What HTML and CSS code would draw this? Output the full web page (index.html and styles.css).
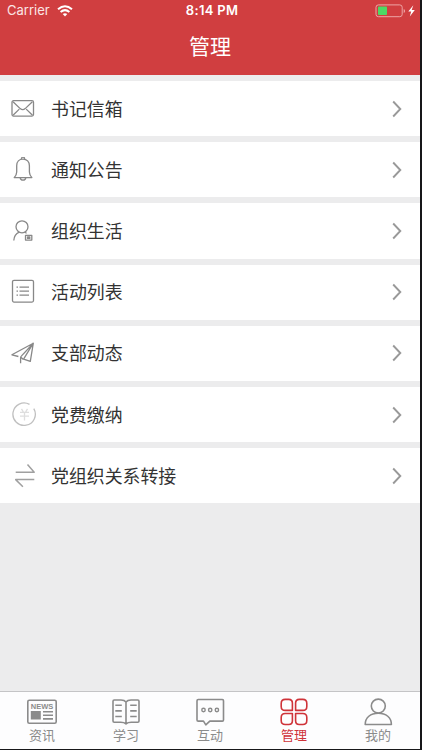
FILE: index.html
```html
<!DOCTYPE html>
<html lang="zh-CN">
<head>
<meta charset="utf-8">
<title>管理</title>
<link rel="stylesheet" href="styles.css">
</head>
<body>
<div class="device">
  <header class="header">
    <div class="status">
      <div class="carrier"><span>Carrier</span>
        <svg class="wifi" width="16" height="12" viewBox="0 0 16 12" fill="none" stroke="#fff" stroke-width="2"><path d="M1 4.3Q8-1.8 15 4.3M3.6 7Q8 3.2 12.4 7"/><path d="M5.7 9.1Q8 7.3 10.3 9.1L8 11.5Z" fill="#fff" stroke="none"/></svg>
      </div>
      <div class="time">8:14 PM</div>
      <div class="power">
        <svg width="41" height="14" viewBox="0 0 41 14"><rect x="1" y=".9" width="26.2" height="11.8" rx="2.4" fill="none" stroke="#eda5a5"/><rect x="3" y="2.500" width="9" height="8.600" rx=".8" fill="#4cd964"/><path d="M28.700 5v4q1.400-.5 1.400-2t-1.400-2" fill="#eda5a5"/><path d="M38.300 1.300L33.300 7.600h2.900l-1.400 4.900 5-6.500h-3.100z" fill="#fff"/></svg>
      </div>
    </div>
    <h1 class="title">管理</h1>
  </header>
  <main class="list">
    <div class="row">
      <svg class="icon" viewBox="0 0 26 26"><rect x="1" y="4.700" width="21.500" height="15.400" rx="1.500"/><path d="M2 5.700l7.200 6.900q2.500 2.100 5 0l7.200-6.900M2 19.300l6.300-6.200M21.500 19.300l-6.300-6.200"/></svg>
      <span class="label">书记信箱</span><svg class="chevron" viewBox="0 0 10 18"><path d="M1.200 1.500L8.300 9l-7.100 7.500"/></svg>
    </div>
    <div class="row">
      <svg class="icon" viewBox="0 0 26 26"><path d="M3.200 20.600h17.700c-1.600-1.800-2.500-3.200-2.500-5.600V8.700c0-4-2.500-6.600-6.400-6.600S5.700 4.700 5.700 8.700V15c0 2.400-.9 3.800-2.500 5.600zM10.300 2.200c0-2.800 3.400-2.800 3.400 0M9.200 20.800c.4 3 5.200 3 5.600 0"/></svg>
      <span class="label">通知公告</span><svg class="chevron" viewBox="0 0 10 18"><path d="M1.200 1.500L8.300 9l-7.100 7.500"/></svg>
    </div>
    <div class="row">
      <svg class="icon" viewBox="0 0 26 26"><circle cx="11" cy="8.800" r="6"/><path d="M2.800 22.500c.2-4 2.100-6.700 5.400-8.300M13.800 14.200l1.800 1.100M14.500 17.300h6.300v4.800h-6.300z"/><path d="M16.500 19h2.300v1.400h-2.300z"/></svg>
      <span class="label">组织生活</span><svg class="chevron" viewBox="0 0 10 18"><path d="M1.200 1.500L8.300 9l-7.100 7.500"/></svg>
    </div>
    <div class="row">
      <svg class="icon" viewBox="0 0 26 26"><rect x="1.500" y="1.300" width="21" height="21.800" rx="1.500"/><path d="M8.500 8.200H18M8.500 12.200H18M8.500 16.200H18M5.500 8.200H7M5.500 12.200H7M5.500 16.200H7"/></svg>
      <span class="label">活动列表</span><svg class="chevron" viewBox="0 0 10 18"><path d="M1.200 1.500L8.300 9l-7.100 7.500"/></svg>
    </div>
    <div class="row">
      <svg class="icon" viewBox="0 0 26 26"><path d="M9.600 23.300V17.800q0-1 .7-1.700L22.300 3.200.9 14.800l6.500 1.700M22.300 3.200L19.300 21.400l-6.700-2.300L22.300 3.200M12.400 19.500L9.600 17"/></svg>
      <span class="label">支部动态</span><svg class="chevron" viewBox="0 0 10 18"><path d="M1.200 1.500L8.300 9l-7.100 7.500"/></svg>
    </div>
    <div class="row">
      <svg class="icon faint" viewBox="0 0 26 26"><path d="M18.500 2.400A11.200 11.200 0 1 0 22.800 6.600"/><path class="yen" d="M10.500 6.800l1.800 3M16.500 6.800l-1.800 3M9 10.400h9M9 14.200h9M13.500 10.400v8"/></svg>
      <span class="label">党费缴纳</span><svg class="chevron" viewBox="0 0 10 18"><path d="M1.200 1.500L8.300 9l-7.100 7.500"/></svg>
    </div>
    <div class="row">
      <svg class="icon swap" viewBox="0 0 26 26"><path d="M4.700 9.200h18.500L16.500 1.600M23.300 16.600H4.700l7.200 7.200"/></svg>
      <span class="label">党组织关系转接</span><svg class="chevron" viewBox="0 0 10 18"><path d="M1.200 1.500L8.300 9l-7.100 7.500"/></svg>
    </div>
  </main>
  <nav class="tabs">
    <div class="tab"><svg viewBox="0 0 32 30"><rect x="1.800" y="3.300" width="28.400" height="23" rx="1.500"/><text x="16" y="12" text-anchor="middle">NEWS</text><path class="solid" d="M4.800 14h10v8.500h-10z"/><path d="M17 14.700h10M17 18.300h10M17 21.900h10"/></svg><span>资讯</span></div>
    <div class="tab"><svg viewBox="0 0 32 30"><path d="M16 5q-1.500-2-5-2H4.200q-1.200 0-1.200 1.200v19.800q0 1.200 1.200 1.200h6.500q3.500 0 5.300 1.600 1.800-1.600 5.300-1.600h6.500q1.200 0 1.200-1.200V4.200Q29 3 27.800 3H21q-3.500 0-5 2zV26M5.300 8.300h6.500M5.300 13.900h6.500M5.300 19.500h6.500M20.200 8.300h6.500M20.200 13.900h6.500M20.200 19.500h6.500"/></svg><span>学习</span></div>
    <div class="tab"><svg viewBox="0 0 32 30"><path d="M4.200 2.500h24.100q1.200 0 1.200 1.200v19.200q0 1.200-1.200 1.200H15.800L11.800 27.800 9.500 24.100H4.200Q3 24.100 3 22.900V3.700q0-1.200 1.200-1.200z"/><g class="dots"><circle cx="9.500" cy="13" r="1.700"/><circle cx="16.200" cy="13" r="1.700"/><circle cx="22.900" cy="13" r="1.700"/></g></svg><span>互动</span></div>
    <div class="tab active"><svg viewBox="0 0 32 30"><path d="M7.200 2.400h3.500q3.700 0 3.700 3.700v7.300H7.200q-4 0-4-4V6.400q0-4 4-4zM21.300 2.400h3.500q4 0 4 4v3q0 4-4 4h-7.200V6.100q0-3.700 3.700-3.700zM7.200 16.500h7.200v7.300q0 3.700-3.700 3.700H7.200q-4 0-4-4v-3q0-4 4-4zM17.600 16.500h7.200q4 0 4 4v3q0 4-4 4h-3.500q-3.700 0-3.700-3.700z"/></svg><span>管理</span></div>
    <div class="tab"><svg viewBox="0 0 32 30"><circle cx="16.300" cy="9.100" r="7"/><path d="M3.200 27.500C3.200 20.600 8.500 16.200 16.300 16.200S29.400 20.600 29.400 27.500z"/></svg><span>我的</span></div>
  </nav>
</div>
</body>
</html>
```
FILE: styles.css
```css
* { box-sizing: border-box; }
body {
  margin: 0;
  width: 422px;
  height: 750px;
  overflow: hidden;
  background: #171719;
  font-family: "Noto Sans CJK SC", sans-serif;
}
.device {
  width: 420px;
  height: 748.500px;
  display: flex;
  flex-direction: column;
  background: #ececed;
}
.header { height: 75px; background: #d03e40; color: #fff; }
.status {
  height: 21px;
  padding: 0 4px 0 7px;
  display: grid;
  grid-template-columns: 1fr auto 1fr;
  align-items: center;
  font: 13px/21px Inter, sans-serif;
}
.carrier { display: flex; align-items: center; gap: 7px; color: #fbe5e5; }
.time { font-weight: 600; letter-spacing: .3px; margin-left: 1px; }
.power { display: flex; justify-content: flex-end; }
.title {
  margin: 0;
  height: 50px;
  font-size: 21px;
  font-weight: 400;
  line-height: 49px;
  text-align: center;
}
.list { flex: 1; display: flex; flex-direction: column; gap: 6px; padding-top: 6px; }
.row {
  height: 55.200px;
  display: flex;
  align-items: center;
  padding: 0 18px 0 11px;
  background: #fff;
}
.icon { width: 26px; height: 26px; fill: none; stroke: #888; stroke-width: 1.300; stroke-linejoin: round; }
.faint { stroke: #c0c0c0; }
.yen { stroke: #dedede; }
.swap { stroke-width: 1.500; stroke: #a0a0a0; }
.label { flex: 1; margin-left: 14px; padding-bottom: 2px; font-size: 17.900px; line-height: 26px; color: #333; }
.chevron { width: 10px; height: 18px; fill: none; stroke: #999; stroke-width: 1.900; }
.tabs {
  height: 58px;
  border-top: 1px solid #c4c4c6;
  background: #fdfdfe;
  display: grid;
  grid-template-columns: repeat(5, 1fr);
}
.tab { display: flex; flex-direction: column; align-items: center; padding-top: 5px; color: #8b8b8b; }
.tab svg { width: 32px; height: 30px; fill: none; stroke: currentColor; stroke-width: 1.600; stroke-linejoin: round; }
.tab text { font: bold 7.500px "Liberation Sans", sans-serif; fill: currentColor; stroke: none; }
.tab .solid { fill: currentColor; stroke: none; }
.dots { stroke-width: 1.400; }
.tab span { font-size: 13px; line-height: 18px; margin-top: -1px; }
.tab.active { color: #cf3339; }
```
